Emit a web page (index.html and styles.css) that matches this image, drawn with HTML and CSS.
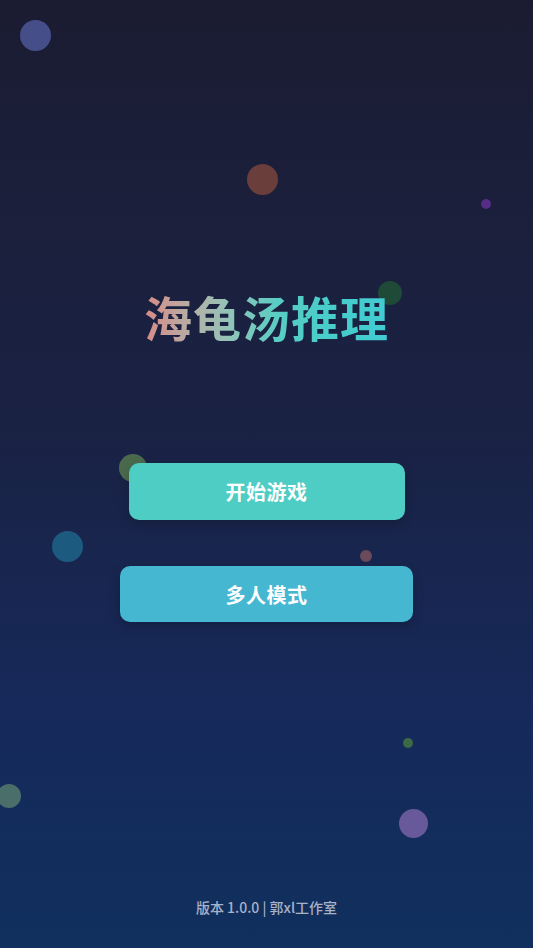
FILE: index.html
```html
<!DOCTYPE html>
<html lang="zh">
<head>
<meta charset="utf-8">
<title>海龟汤推理</title>
<link rel="stylesheet" href="styles.css">
</head>
<body>
<div class="screen">
  <div class="bubbles">
    <span class="bubble b1"></span>
    <span class="bubble b2"></span>
    <span class="bubble b3"></span>
    <span class="bubble b4"></span>
    <span class="bubble b5"></span>
    <span class="bubble b6"></span>
    <span class="bubble b7"></span>
    <span class="bubble b8"></span>
    <span class="bubble b9"></span>
    <span class="bubble b10"></span>
  </div>
  <main class="content">
    <h1 class="title">海龟汤推理</h1>
    <div class="actions">
      <button class="btn btn-start">开始游戏</button>
      <button class="btn btn-multi">多人模式</button>
    </div>
    <footer class="footer">版本 1.0.0 | 郭xl工作室</footer>
  </main>
</div>
</body>
</html>
```
FILE: styles.css
```css
html, body {
  margin: 0;
  padding: 0;
}
body {
  font-family: "Noto Sans CJK SC", "Noto Sans", sans-serif;
}
.screen {
  position: relative;
  width: 533px;
  height: 948px;
  overflow: hidden;
  background: linear-gradient(180deg, #1b1c32 0%, #1a2244 45%, #16295a 75%, #10305e 100%);
}
.bubbles {
  position: absolute;
  inset: 0;
}
.bubble {
  position: absolute;
  border-radius: 50%;
}
.b1 { left: 20px; top: 20px; width: 31px; height: 31px; background: #464e8a; }
.b2 { left: 247px; top: 164px; width: 31px; height: 31px; background: #6a3e3a; }
.b3 { left: 378px; top: 281px; width: 24px; height: 24px; background: #1f4a38; }
.b4 { left: 52px; top: 531px; width: 31px; height: 31px; background: #1d5a80; }
.b5 { left: 399px; top: 809px; width: 29px; height: 29px; background: #68599a; }
.b6 { left: -3px; top: 784px; width: 24px; height: 24px; background: #4a6e6a; }
.b7 { left: 481px; top: 199px; width: 10px; height: 10px; background: #552c86; }
.b8 { left: 119px; top: 454px; width: 28px; height: 28px; background: #4b6a4c; }
.b9 { left: 360px; top: 550px; width: 12px; height: 12px; background: #6b4a5c; }
.b10 { left: 403px; top: 738px; width: 10px; height: 10px; background: #3c6a44; }

.content {
  position: relative;
  height: 100%;
  display: flex;
  flex-direction: column;
  align-items: center;
  box-sizing: border-box;
  padding-top: 287px;
  padding-bottom: 31px;
}
.title {
  margin: 0;
  font-size: 48px;
  line-height: 58px;
  font-weight: 700;
  letter-spacing: 1px;
  background: linear-gradient(90deg, #d98a86 0%, #b0b4aa 22%, #8fc4b8 36%, #58cdc3 55%, #45cdcc 80%, #42cbd3 100%);
  -webkit-background-clip: text;
  background-clip: text;
  color: transparent;
}
.actions {
  margin-top: 118px;
  display: flex;
  flex-direction: column;
  align-items: center;
  gap: 46px;
}
.btn {
  border: none;
  border-radius: 10px;
  color: #ffffff;
  font-family: "Noto Sans CJK SC", "Noto Sans", sans-serif;
  font-size: 20px;
  font-weight: 700;
  letter-spacing: 0.5px;
  box-shadow: 0 4px 12px rgba(0, 0, 0, 0.2);
  padding: 0;
}
.btn-start {
  width: 276px;
  height: 57px;
  background: #4ecdc4;
}
.btn-multi {
  width: 293px;
  height: 56px;
  background: #45b7d1;
}
.footer {
  margin-top: auto;
  font-size: 14px;
  line-height: 20px;
  font-weight: 500;
  color: #a8b2c8;
}
```
